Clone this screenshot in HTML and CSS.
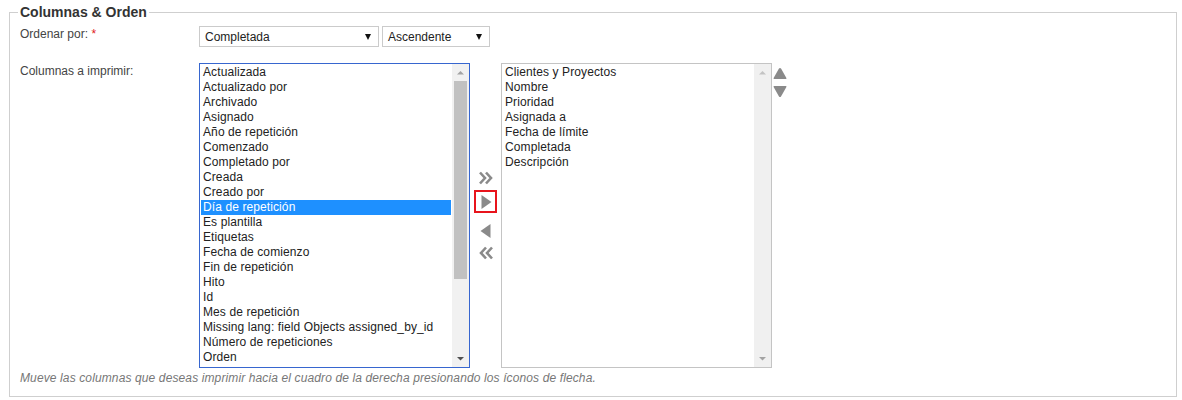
FILE: index.html
```html
<!DOCTYPE html>
<html lang="es">
<head>
<meta charset="utf-8">
<title>Columnas &amp; Orden</title>
<link rel="stylesheet" href="styles.css">
</head>
<body>
<fieldset class="panel">
  <legend class="panel-title">Columnas &amp; Orden</legend>

  <div class="row row-order">
    <div class="label">Ordenar por: <span class="req">*</span></div>
    <div class="controls">
      <div class="select select-field"><span>Completada</span><i class="caret"></i></div>
      <div class="select select-dir"><span>Ascendente</span><i class="caret"></i></div>
    </div>
  </div>

  <div class="row row-cols">
    <div class="label">Columnas a imprimir:</div>
    <div class="picker">
      <div class="listbox listbox-focus">
        <ul class="options">
          <li>Actualizada</li>
          <li>Actualizado por</li>
          <li>Archivado</li>
          <li>Asignado</li>
          <li>Año de repetición</li>
          <li>Comenzado</li>
          <li>Completado por</li>
          <li>Creada</li>
          <li>Creado por</li>
          <li class="selected">Día de repetición</li>
          <li>Es plantilla</li>
          <li>Etiquetas</li>
          <li>Fecha de comienzo</li>
          <li>Fin de repetición</li>
          <li>Hito</li>
          <li>Id</li>
          <li>Mes de repetición</li>
          <li>Missing lang: field Objects assigned_by_id</li>
          <li>Número de repeticiones</li>
          <li>Orden</li>
        </ul>
        <div class="scrollbar">
          <svg class="sb-arrow" width="17" height="17" viewBox="0 0 17 17"><path d="M5 10.5 L8.5 7 L12 10.5 Z" fill="#a3a3a3"/></svg>
          <div class="sb-track"><div class="sb-thumb"></div></div>
          <svg class="sb-arrow" width="17" height="17" viewBox="0 0 17 17"><path d="M5 7 L8.5 10.5 L12 7 Z" fill="#505050"/></svg>
        </div>
      </div>

      <div class="movers">
        <button class="mover" aria-label="Mover todos">
          <svg width="16" height="14" viewBox="0 0 16 14"><path d="M2 1.5 L7 7 L2 12.5 M8 1.5 L13 7 L8 12.5" fill="none" stroke="#8a8a8a" stroke-width="2.6"/></svg>
        </button>
        <button class="mover mover-active" aria-label="Mover">
          <svg width="12" height="16" viewBox="0 0 12 16"><path d="M1.5 1 L11.5 8 L1.5 15 Z" fill="#8a8a8a"/></svg>
        </button>
        <button class="mover mover-back" aria-label="Quitar">
          <svg width="12" height="16" viewBox="0 0 12 16"><path d="M10.5 1 L0.5 8 L10.5 15 Z" fill="#8a8a8a"/></svg>
        </button>
        <button class="mover mover-backall" aria-label="Quitar todos">
          <svg width="16" height="14" viewBox="0 0 16 14"><path d="M8 1.5 L3 7 L8 12.5 M14 1.5 L9 7 L14 12.5" fill="none" stroke="#8a8a8a" stroke-width="2.6"/></svg>
        </button>
      </div>

      <div class="listbox listbox-plain">
        <ul class="options">
          <li>Clientes y Proyectos</li>
          <li>Nombre</li>
          <li>Prioridad</li>
          <li>Asignada a</li>
          <li>Fecha de límite</li>
          <li>Completada</li>
          <li>Descripción</li>
        </ul>
        <div class="scrollbar scrollbar-off">
          <svg class="sb-arrow" width="17" height="17" viewBox="0 0 17 17"><path d="M5 10.5 L8.5 7 L12 10.5 Z" fill="#c3c3c3"/></svg>
          <div class="sb-track"></div>
          <svg class="sb-arrow" width="17" height="17" viewBox="0 0 17 17"><path d="M5 7 L8.5 10.5 L12 7 Z" fill="#a3a3a3"/></svg>
        </div>
      </div>

      <div class="sorters">
        <button class="sorter" aria-label="Subir">
          <svg width="14" height="13" viewBox="0 0 14 13"><path d="M7 1 Q7.6 1 8 1.6 L13.4 11 Q13.8 12 12.8 12 L1.2 12 Q0.2 12 0.6 11 L6 1.6 Q6.4 1 7 1 Z" fill="#8a8a8a"/></svg>
        </button>
        <button class="sorter" aria-label="Bajar">
          <svg width="14" height="13" viewBox="0 0 14 13"><path d="M7 12 Q7.6 12 8 11.4 L13.4 2 Q13.8 1 12.8 1 L1.2 1 Q0.2 1 0.6 2 L6 11.4 Q6.4 12 7 12 Z" fill="#8a8a8a"/></svg>
        </button>
      </div>
    </div>
  </div>

  <p class="help">Mueve las columnas que deseas imprimir hacia el cuadro de la derecha presionando los íconos de flecha.</p>
</fieldset>
</body>
</html>
```

FILE: styles.css
```css
html, body {
  margin: 0;
  padding: 0;
  background: #fff;
}

body {
  font-family: "Liberation Sans", Arial, sans-serif;
  font-size: 12px;
  color: #333;
}

.panel {
  margin: 4px 5px 0 9px;
  padding: 0 10px 10px 10px;
  border: 1px solid #cfcfcf;
  min-width: 0;
}

.panel-title {
  padding: 0 2px;
  margin-left: -2px;
  font-size: 14px;
  line-height: 16px;
  font-weight: bold;
  color: #333;
}

.row {
  display: flex;
  align-items: flex-start;
}

.row-order {
  margin-top: 6px;
}

.row-cols {
  margin-top: 16px;
}

.label {
  width: 179px;
  flex: none;
  line-height: 15px;
  padding-top: 1px;
  color: #444;
}

.req {
  color: #e02020;
}

.controls {
  display: flex;
  gap: 3px;
}

.select {
  box-sizing: border-box;
  height: 21px;
  border: 1px solid #cbcbcb;
  background: #fff;
  display: flex;
  align-items: center;
  justify-content: space-between;
  padding: 1px 7px 0 5px;
  color: #222;
  font-size: 12px;
}

.select-field {
  width: 180px;
}

.select-dir {
  width: 108px;
}

.caret {
  display: block;
  width: 0;
  height: 0;
  border-left: 3.5px solid transparent;
  border-right: 3.5px solid transparent;
  border-top: 6px solid #111;
}

.picker {
  display: flex;
  align-items: flex-start;
}

.listbox {
  box-sizing: border-box;
  width: 271px;
  height: 305px;
  border: 1px solid #bdbdbd;
  display: flex;
  overflow: hidden;
  background: #fff;
}

.listbox-focus {
  border-color: #3766cf;
}

.listbox-plain {
  width: 271px;
  border-color: #c4c4c4;
}

.options {
  list-style: none;
  margin: 0;
  padding: 1px 1px 0 1px;
  flex: 1;
  overflow: hidden;
}

.options li {
  height: 15px;
  line-height: 15px;
  padding: 0 3px 0 2px;
  color: #222;
  white-space: nowrap;
  letter-spacing: 0.1px;
}

.listbox-plain .options li {
  padding: 0 3px 0 2px;
}

.options li.selected {
  background: #1e90ff;
  color: #fff;
}

.scrollbar {
  width: 17px;
  flex: none;
  display: flex;
  flex-direction: column;
  background: #f1f1f1;
}

.sb-arrow {
  display: block;
  flex: none;
}

.sb-track {
  flex: 1;
  padding: 0 2px;
}

.sb-thumb {
  height: 198px;
  background: #c1c1c1;
}

.scrollbar-off {
  background: #f0f0f0;
}

.movers {
  width: 31px;
  flex: none;
  display: flex;
  flex-direction: column;
  align-items: center;
  padding-top: 106px;
}

.mover,
.sorter {
  border: 0;
  background: none;
  padding: 0;
  margin: 0;
  display: flex;
  align-items: center;
  justify-content: center;
  cursor: pointer;
}

.mover {
  width: 23px;
  height: 18px;
  box-sizing: border-box;
  border: 2px solid transparent;
}

.mover-active {
  height: 23px;
  border-color: #e8141c;
  margin-top: 3px;
}

.mover-back {
  margin-top: 9px;
}

.mover-backall {
  margin-top: 4px;
}

.sorters {
  display: flex;
  flex-direction: column;
  gap: 5px;
  padding-top: 4px;
  margin-left: 1px;
}

.sorter {
  width: 14px;
  height: 13px;
}

.help {
  margin: 3px 0 0 0;
  font-style: italic;
  color: #777;
  line-height: 15px;
  letter-spacing: 0.12px;
}
```
